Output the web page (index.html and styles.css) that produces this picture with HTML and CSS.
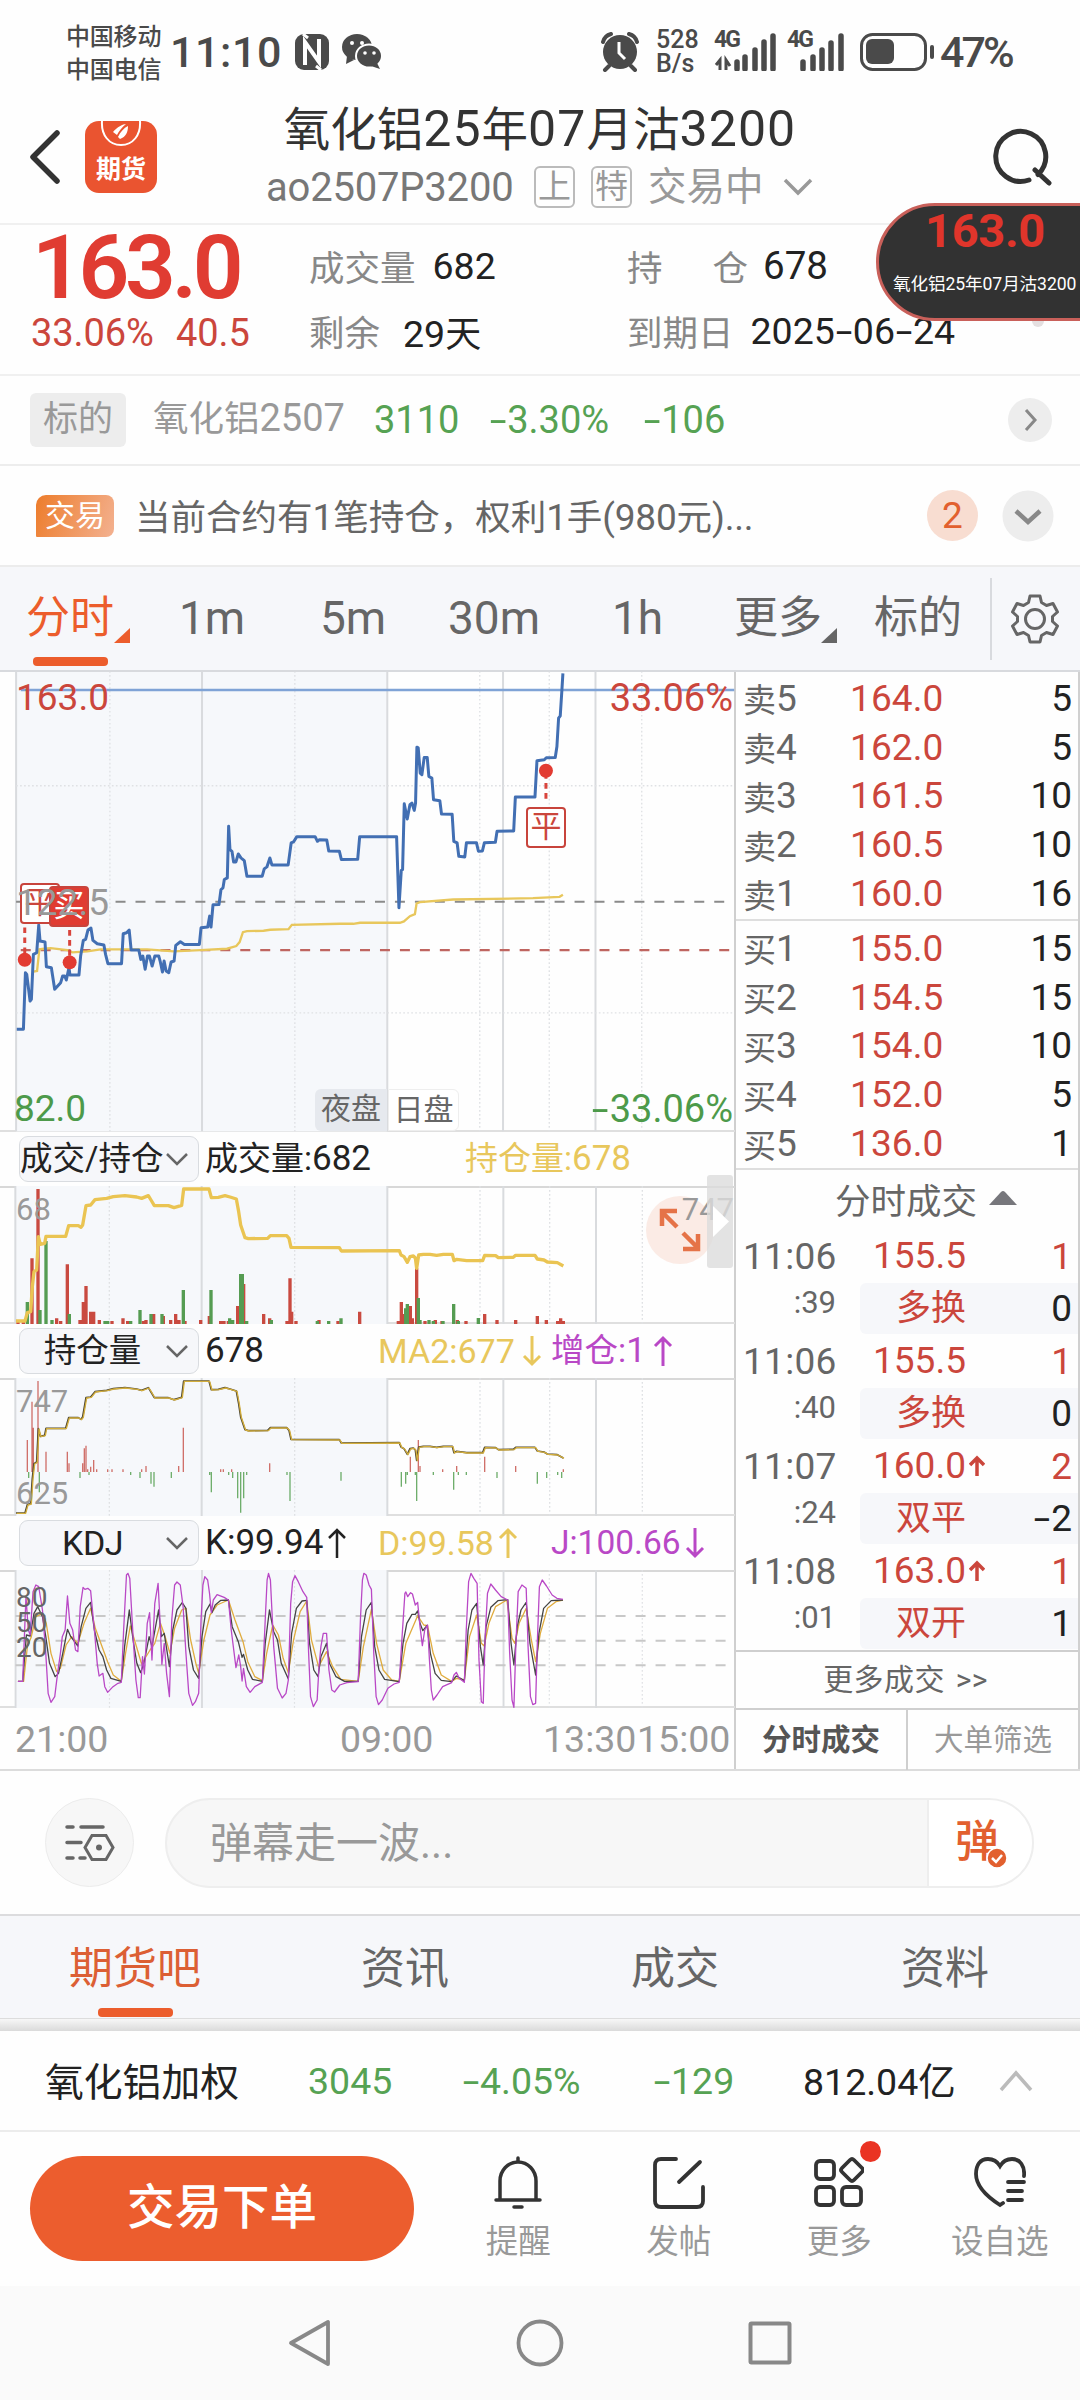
FILE: index.html
```html
<!DOCTYPE html>
<html lang="zh-CN">
<head>
<meta charset="utf-8">
<title>氧化铝25年07月沽3200</title>
<link rel="stylesheet" href="styles.css">
</head>
<body>
<div class="app">
  <header class="status">
    <div class="carriers"><span>中国移动</span><span>中国电信</span></div>
    <span class="clock">11:10</span>
    <svg class="nfc" width="34" height="36" viewBox="0 0 34 36"><rect x="0" y="0" width="34" height="36" rx="9" fill="#4a4a4a"/><path d="M10 31V8l14 20V5" fill="none" stroke="#fff" stroke-width="4"/><path d="M8 0 L13 4M26 36l-5-4" stroke="#fff" stroke-width="3"/></svg>
    <svg class="wechat" width="40" height="36" viewBox="0 0 40 36"><ellipse cx="15" cy="13" rx="15" ry="13" fill="#4a4a4a"/><path d="M5 22l-1 8 8-4z" fill="#4a4a4a"/><ellipse cx="27" cy="22" rx="13" ry="11.500" fill="#4a4a4a" stroke="#fff" stroke-width="2"/><path d="M35 29l3 6-9-3z" fill="#4a4a4a"/><g fill="#fff"><circle cx="10" cy="9" r="2"/><circle cx="20" cy="9" r="2"/><circle cx="23" cy="19" r="1.800"/><circle cx="32" cy="19" r="1.800"/></g></svg>
    <span class="grow"></span>
    <svg width="38" height="40" viewBox="0 0 38 40"><circle cx="19" cy="20" r="17" fill="#4a4a4a"/><path d="M2 10C3 6 6 3 10 2M36 10c-1-4-4-7-8-8M8 34l-4 4M30 34l4 4" stroke="#4a4a4a" stroke-width="4" fill="none" stroke-linecap="round"/><path d="M18 10v11l6 6" stroke="#fff" stroke-width="3" fill="none"/></svg>
    <div class="net"><span>528</span><span>B/s</span></div>
    <div class="cell"><span>4G</span><svg width="62" height="38" viewBox="0 0 62 38"><path d="M2 32l4-5v10M12 37V27l4 6" stroke="#4a4a4a" stroke-width="3" fill="none"/><path d="M23 36V29M31 36V24M41 36V17M50 36V9M59 36V3" stroke="#4a4a4a" stroke-width="5.500" stroke-linecap="round"/></svg></div>
    <div class="cell cell2"><span>4G</span><svg width="58" height="38" viewBox="0 0 58 38"><path d="M16 36V29M26 36V24M35 36V17M44 36V10M54 36V3" stroke="#4a4a4a" stroke-width="5.500" stroke-linecap="round"/></svg></div>
    <svg class="battery" width="76" height="38" viewBox="0 0 76 38"><rect x="1.500" y="1.500" width="64" height="35" rx="11" fill="none" stroke="#4a4a4a" stroke-width="3"/><rect x="6" y="6" width="28" height="25" rx="6" fill="#4a4a4a"/><path d="M72 14v10" stroke="#4a4a4a" stroke-width="4" stroke-linecap="round"/></svg>
    <span class="pct">47%</span>
  </header>

  <section class="head">
    <svg class="back" width="32" height="54" viewBox="0 0 32 54"><path d="M28 3L4 27l24 24" fill="none" stroke="#333" stroke-width="5.500" stroke-linecap="round" stroke-linejoin="round"/></svg>
    <div class="logo"><svg width="42" height="26" viewBox="0 0 42 26"><path d="M2 0C1 14 9 24 21 24S41 14 40 0" fill="none" stroke="#fff" stroke-width="2"/><path d="M13 11C17 6 23 3 26 3c-4 3-7 7-9 11zM18 16c2-5 6-9 10-11 0 6-2 11-8 13z" fill="#fff"/></svg><b>期货</b></div>
    <div class="titles">
      <h1>氧化铝<i>25</i>年<i>07</i>月沽<i>3200</i></h1>
      <div class="sub"><span class="code">ao2507P3200</span><span class="tag">上</span><span class="tag">特</span><span class="state">交易中</span><svg width="32" height="20" viewBox="0 0 32 20"><path d="M3 3l13 13L29 3" fill="none" stroke="#999" stroke-width="3.500"/></svg></div>
    </div>
    <svg class="search" width="60" height="60" viewBox="0 0 60 60"><path d="M36 52A25 25 0 1 1 45 46.500M42 42l14 13" fill="none" stroke="#333" stroke-width="5" stroke-linecap="round"/></svg>
  </section>

  <section class="quote">
    <div class="price"><strong>163.0</strong><div class="chg"><span>33.06%</span><span>40.5</span></div></div>
    <dl><div><dt>成交量</dt><dd>682</dd></div><div><dt>剩余</dt><dd class="left">29<em>天</em></dd></div></dl>
    <dl><div><dt class="wide"><span>持</span><span>仓</span></dt><dd class="hold">678</dd></div><div><dt>到期日</dt><dd class="date">2025<i class="m">-</i>06<i class="m">-</i>24</dd></div></dl>
    <i class="dot"></i>
    <div class="floater"><strong>163.0</strong><span>氧化铝25年07月沽3200</span></div>
  </section>

  <section class="under"><span class="badge">标的</span><span class="nm">氧化铝<i>2507</i></span><span class="g c1">3110</span><span class="g c2"><i class="m">-</i>3.30%</span><span class="g c3"><i class="m">-</i>106</span><span class="grow"></span>
    <svg width="46" height="46" viewBox="0 0 46 46"><circle cx="23" cy="23" r="22" fill="#ededed"/><path d="M19 13l9 10-9 10" fill="none" stroke="#888" stroke-width="3"/></svg></section>
  <section class="notice"><span class="trade">交易</span><span class="msg">当前合约有<i>1</i>笔持仓，权利<i>1</i>手<i>(980</i>元<i>)...</i></span><span class="grow"></span><span class="cnt">2</span>
    <svg width="52" height="52" viewBox="0 0 52 52"><circle cx="26" cy="26" r="25.500" fill="#ededed"/><path d="M14 21l12 11 12-11" fill="none" stroke="#888" stroke-width="4.500"/></svg></section>

  <nav class="periods">
    <span class="p on">分时<svg width="16" height="15"><path d="M16 0v15H0z" fill="#ec5d2c"/></svg></span><span class="p lat m1">1m</span><span class="p lat m5">5m</span><span class="p lat m30">30m</span><span class="p lat h1">1h</span><span class="p more">更多<svg width="16" height="15"><path d="M16 0v15H0z" fill="#666"/></svg></span><span class="p tgt">标的</span>
    <span class="gear"><svg width="48" height="50" viewBox="0 0 48 50"><path d="M19 2h10l1.500 6.500 5 3 6.500-2 4.500 8.500-5 4.500v5l5 4.500-4.500 8.500-6.500-2-5 3L29 48H19l-1.500-6.500-5-3-6.500 2L1.500 32l5-4.500v-5l-5-4.500L6 9.500l6.500 2 5-3z" fill="none" stroke="#666" stroke-width="3" stroke-linejoin="round"/><circle cx="24" cy="25" r="9.500" fill="none" stroke="#666" stroke-width="3"/></svg></span>
  </nav>

  <main class="board">
    <div class="charts">
      <div class="panel main-panel">
        <svg width="736" height="461" viewBox="0 36 2208 1383">
          <rect x="45" y="33" width="1117" height="1384" fill="#f6f8fb"/>
          <path class="grid" d="M46 33V1417M605 33V1417M1162 33V1417M1510 33V1417M1788 33V1417"/>
          <path class="dots" d="M328 33V1417M884 33V1417M1440 33V1417M1649 33V1417M1927 33V1417M46 378H2205M46 1061H2205"/>
          <path d="M60 90H2205" stroke="#7fa3d6" stroke-width="7"/>
          <path d="M46 727H60M345 727H2205" stroke="#8a8a8a" stroke-width="6" stroke-dasharray="30 30"/>
          <path d="M60 872H2205" stroke="#bf6560" stroke-width="7" stroke-dasharray="30 30"/>
          <polyline fill="none" stroke="#e8c75c" stroke-width="7" points="98,937 109,935 116,870 130,868 150,866 200,872 215,879 260,876 300,870 370,870 440,870 520,876 600,872 680,868 708,860 718,848 728,818 740,815 790,814 810,811 865,809 875,796 1020,793 1060,793 1080,790 1200,790 1212,786 1230,770 1245,764 1250,732 1260,728 1360,720 1600,716 1680,712 1690,706"/>
          <polyline fill="none" stroke="#426fb3" stroke-width="9" stroke-linejoin="round" points="48,1110 68,1110 74,940 78,945 88,1025 92,1020 98,885 108,880 114,797 118,845 133,848 137,922 152,925 162,990 180,970 186,950 192,950 197,962 205,925 208,947 235,947 240,890 248,843 255,840 262,812 271,806 277,843 290,853 310,857 315,885 322,913 363,913 368,823 378,820 386,812 392,872 415,872 421,900 427,890 434,930 441,890 447,890 455,920 463,890 475,890 479,905 486,938 491,905 497,935 505,940 512,908 521,905 526,858 540,847 552,855 597,855 602,805 622,803 628,770 632,803 638,736 656,735 662,690 668,685 672,660 681,655 685,500 689,570 695,575 700,607 707,607 714,583 722,595 732,603 740,650 786,650 792,628 800,622 809,595 815,616 864,616 873,550 880,547 890,531 945,531 952,545 958,540 980,541 986,574 1018,575 1024,600 1073,599 1079,531 1190,531 1197,745 1204,633 1208,630 1213,432 1222,478 1230,435 1236,430 1243,452 1247,430 1251,262 1255,264 1261,340 1266,345 1273,293 1282,293 1287,350 1296,355 1301,420 1320,423 1325,463 1357,464 1362,545 1372,550 1377,590 1395,592 1400,549 1430,549 1436,575 1448,574 1454,549 1487,548 1492,515 1542,514 1547,412 1606,412 1612,303 1634,300 1640,294 1667,293 1672,260 1677,175 1682,168 1687,90 1690,40"/>
          <path d="M72 804V890M207 812V890M1639 340V430" stroke="#d8443c" stroke-width="9" stroke-dasharray="17 13"/>
          <g fill="#e23b32"><circle cx="72" cy="901" r="21"/><circle cx="207" cy="909" r="21"/><circle cx="1639" cy="333" r="21"/></g>
        </svg>
        <span class="mark m-flat1">平</span><span class="mark m-buy">买</span><span class="mark m-flat2">平</span>
        <span class="lb hi">163.0</span><span class="lb hip">33.06%</span><span class="lb mid">122.5</span><span class="lb lo">82.0</span><span class="lb lop"><i class="m">-</i>33.06%</span>
        <span class="sess night">夜盘</span><span class="sess day">日盘</span>
      </div>

      <div class="ind"><span class="pick tight">成交/持仓<svg width="24" height="14"><path d="M2 2l10 10L22 2" fill="none" stroke="#666" stroke-width="2.500"/></svg></span><span class="v v1">成交量:<i>682</i></span><span class="v y v2">持仓量:<i>678</i></span></div>
      <div class="panel">
        <svg width="736" height="138" viewBox="0 168 2208 414">
          <rect x="45" y="168" width="1117" height="414" fill="#f6f8fb"/>
          <path class="grid" d="M46 168V582M605 168V582M1162 168V582M1510 168V582M1788 168V582"/>
          <path class="dots" d="M328 168V582M884 168V582M1440 168V582M1649 168V582M1927 168V582"/>
          <path stroke="#c94a40" stroke-width="10" d="M54 582V575M70 582V575M96 582V385M114 582V177M170 582V565M182 582V573M202 582V403M240 582V570M250 582V516M258 582V468M272 582V545M281 582V545M298 582V570M336 582V573M369 582V565M383 582V573M430 582V573M438 582V570M461 582V552M490 582V558M512 582V570M527 582V552M537 582V570M555 582V573M602 582V570M628 582V558M662 582V573M672 582V573M685 582V573M713 582V528M731 582V462M791 582V552M809 582V565M870 582V445M875 582V545M861 582V573M888 582V573M957 582V570M1014 582V573M1079 582V545M1195 582V573M1204 582V516M1213 582V552M1231 582V528M1237 582V565M1250 582V415M1275 582V573M1306 582V570M1326 582V573M1372 582V570M1398 582V573M1454 582V552M1491 582V570M1547 582V570M1612 582V558M1639 582V570M1673 582V573M1682 582V565M1690 582V573"/>
          <path stroke="#559c52" stroke-width="10" d="M82 582V516M120 582V540M138 582V333M156 582V570M208 582V552M315 582V573M323 582V573M392 582V573M420 582V540M453 582V552M486 582V552M550 582V480M633 582V480M689 582V565M698 582V570M722 582V432M727 582V432M740 582V573M814 582V570M952 582V573M986 582V573M1023 582V565M1217 582V535M1222 582V522M1255 582V504M1260 582V570M1287 582V570M1300 582V573M1329 582V573M1361 582V522M1375 582V573M1435 582V564"/>
          <g fill="none" stroke="#eac452" stroke-width="10" stroke-linejoin="round"><polyline id="oi" points="48,573 75,573 82,548 92,545 97,470 102,425 110,420 115,320 121,343 134,340 138,319 197,319 206,287 235,287 243,292 248,285 258,227 272,225 285,209 320,205 340,200 375,197 410,201 425,205 445,197 453,210 463,227 505,227 522,233 535,229 545,226 551,177 627,177 634,203 655,202 675,197 690,201 709,207 716,245 722,285 735,323 745,326 803,325 811,317 860,317 867,325 873,352 1018,353 1024,363 1198,362 1203,375 1212,380 1222,397 1230,380 1240,378 1246,384 1250,415 1256,375 1270,373 1290,373 1310,376 1330,373 1357,373 1362,392 1370,388 1400,392 1448,392 1454,376 1487,377 1495,383 1540,382 1547,376 1605,376 1612,387 1632,390 1642,396 1672,398 1690,408"/></g>
        </svg>
        <svg class="expand" width="68" height="68" viewBox="0 0 68 68"><circle cx="34" cy="34" r="34" fill="#fbe9e2"/><path d="M31 31L16 16M16 30V15h15M37 37l15 15M52 38v15H37" fill="none" stroke="#e2602f" stroke-width="4.500"/></svg>
        <span class="lb s v68">68</span><span class="lb s v747r">747</span>
        <svg class="handle" width="26" height="93" viewBox="0 0 26 93"><rect width="26" height="93" rx="3" fill="#dcdcdc" fill-opacity=".8"/><path d="M6 31v31l16-15.500z" fill="#fff"/></svg>
      </div>

      <div class="ind"><span class="pick"><b>持仓量</b><svg width="24" height="14"><path d="M2 2l10 10L22 2" fill="none" stroke="#666" stroke-width="2.500"/></svg></span><span class="v v1">678</span><span class="v y w2">MA2:677<svg class="ma" width="20" height="32"><path d="M10 1v28M2 21l8 8 8-8" fill="none" stroke="#e8c75c" stroke-width="3"/></svg></span><span class="v pu w3">增仓:<i>1</i><svg class="ar" width="20" height="32"><path d="M10 31V3M2 11l8-8 8 8" fill="none" stroke="#b948c6" stroke-width="3"/></svg></span></div>
      <div class="panel">
        <svg width="736" height="138" viewBox="0 744 2208 414">
          <rect x="45" y="744" width="1117" height="414" fill="#f6f8fb"/>
          <path class="grid" d="M46 744V1158M605 744V1158M1162 744V1158M1510 744V1158M1788 744V1158"/>
          <path class="dots" d="M328 744V1158M884 744V1158M1440 744V1158M1649 744V1158M1927 744V1158"/>
          <path stroke="#d0706a" stroke-width="4" d="M82 1026V930M96 1026V815M100 1026V893M114 1026V753M138 1026V965M202 1026V965M207 1026V1000M248 1026V1000M253 1026V955M258 1026V947M263 1026V1018M272 1026V1010M281 1026V990M290 1026V1018M323 1026V1018M336 1026V1018M369 1026V1018M425 1026V1018M438 1026V1008M536 1026V1008M550 1026V893M662 1026V1018M670 1026V1018M695 1026V1018M809 1026V1000M1231 1026V980M1255 1026V930M1260 1026V1008M1328 1026V1018M1370 1026V1008M1454 1026V980M1547 1026V1008M1690 1026V1018"/>
          <path stroke="#6fae6c" stroke-width="4" d="M86 1026V1044M118 1026V1087M240 1026V1044M267 1026V1035M392 1026V1035M420 1026V1044M453 1026V1061M462 1026V1070M514 1026V1044M629 1026V1035M634 1026V1087M686 1026V1035M698 1026V1044M713 1026V1105M722 1026V1148M731 1026V1105M740 1026V1035M861 1026V1035M870 1026V1113M1023 1026V1052M1204 1026V1070M1217 1026V1061M1222 1026V1035M1246 1026V1035M1250 1026V1113M1300 1026V1035M1361 1026V1079M1375 1026V1035M1399 1026V1035M1491 1026V1044M1612 1026V1061M1640 1026V1044M1673 1026V1035M1685 1026V1044"/>
          <g fill="none" stroke-linejoin="round"><use href="#oi" y="576" stroke="#4a4432" stroke-width="5"/><use href="#oi" x="2" y="577" stroke="#d3ae3c" stroke-width="4"/></g>
        </svg>
        <span class="lb s v68">747</span><span class="lb s v625">625</span>
      </div>

      <div class="ind"><span class="pick"><b class="kdj">KDJ</b><svg width="24" height="14"><path d="M2 2l10 10L22 2" fill="none" stroke="#666" stroke-width="2.500"/></svg></span><span class="v v1">K:99.94<svg width="20" height="32"><path d="M10 31V3M2 11l8-8 8 8" fill="none" stroke="#222" stroke-width="2.500"/></svg></span><span class="v y w2">D:99.58<svg width="20" height="32"><path d="M10 31V3M2 11l8-8 8 8" fill="none" stroke="#e8c75c" stroke-width="3"/></svg></span><span class="v pu w3">J:100.66<svg width="20" height="32"><path d="M10 1v28M2 21l8 8 8-8" fill="none" stroke="#b948c6" stroke-width="3"/></svg></span></div>
      <div class="panel">
        <svg class="stretch" width="736" height="138" viewBox="0 150 1559.600 414" preserveAspectRatio="none">
          <rect x="32" y="150" width="789" height="414" fill="#f6f8fb"/>
          <path class="grid" d="M33 150V564M428 150V564M821 150V564M1067 150V564M1263 150V564"/>
          <path class="dots" d="M232 150V564M624 150V564M1017 150V564M1164 150V564M1361 150V564"/>
          <path class="levels" d="M33 288H1545M33 362H1545M33 436H1545"/>
          <g fill="none" stroke-width="1.300" stroke-linejoin="round">
          <polyline stroke="#e0ac3e" points="38,484 50,484 58,380 66,352 76,290 90,280 98,310 108,400 120,455 128,445 140,375 152,350 165,370 178,310 192,265 202,325 215,375 228,425 240,465 257,484 266,400 276,318 285,360 300,432 318,390 328,370 340,310 350,350 360,400 370,325 385,270 394,265 404,360 415,430 421,460 432,360 445,285 460,255 484,240 498,300 515,365 525,425 540,470 556,482 565,400 578,315 590,345 600,415 611,458 622,360 636,275 650,243 660,360 675,440 692,395 705,440 722,478 759,484 770,380 787,268 798,370 812,450 830,480 846,484 860,370 885,287 898,315 906,317 918,400 935,465 957,484 967,475 984,480 995,350 1010,285 1020,370 1026,378 1036,310 1050,260 1074,240 1085,355 1091,370 1100,310 1115,265 1126,360 1135,425 1145,340 1160,265 1178,245 1193,240"/>
          <polyline stroke="#444" points="38,484 48,484 56,345 64,348 72,280 80,260 90,290 97,350 105,430 117,470 124,460 133,400 143,328 150,350 165,378 172,320 182,265 192,247 200,330 210,390 218,410 226,450 235,475 257,484 264,380 274,270 282,360 290,430 298,458 305,430 316,350 322,380 336,270 342,350 348,340 359,440 366,330 375,270 386,248 394,265 400,380 410,450 421,475 428,350 436,275 445,252 449,278 456,255 468,241 484,240 492,320 505,365 513,412 516,403 525,450 535,478 556,484 562,370 571,270 580,335 588,360 596,430 611,477 618,340 628,265 640,243 650,241 656,370 665,450 674,470 680,410 692,370 698,430 712,470 730,484 759,484 766,350 776,270 787,247 794,380 803,450 815,478 846,485 854,370 862,310 873,283 880,283 885,273 890,310 896,332 905,316 912,400 922,460 935,481 957,485 967,468 984,482 992,330 1000,270 1010,250 1018,380 1024,435 1030,320 1040,262 1055,242 1076,239 1083,370 1089,435 1096,320 1104,270 1115,247 1123,370 1135,465 1142,340 1152,265 1168,242 1193,240"/>
          <polyline stroke="#b948c6" points="38,484 48,484 55,230 60,330 64,345 70,215 76,195 82,200 90,270 97,400 102,520 108,547 116,530 122,460 128,400 132,350 138,330 143,228 148,310 154,330 160,390 165,395 170,260 176,202 180,208 186,205 192,212 200,330 206,430 210,468 218,460 222,500 228,517 238,502 250,490 257,487 262,330 268,165 271,160 275,175 282,350 288,480 293,533 297,533 302,410 306,462 312,310 317,278 322,420 328,250 335,190 340,330 343,433 348,370 353,460 359,530 364,300 370,195 375,186 382,195 388,260 394,400 400,520 408,556 414,545 421,520 426,300 430,195 434,170 440,180 444,220 448,278 452,240 460,224 475,232 484,240 490,330 500,443 506,405 510,440 513,483 516,445 522,500 530,517 540,500 556,487 562,300 566,180 569,160 573,180 580,380 588,505 598,534 606,520 611,480 616,250 620,185 625,167 632,185 642,215 650,232 654,400 658,530 664,560 672,540 676,440 680,380 685,340 692,340 697,450 703,510 709,516 720,495 735,488 759,485 764,290 768,180 771,160 776,165 782,195 787,208 792,400 797,530 802,554 810,540 822,505 835,492 846,487 852,350 858,220 860,216 864,230 870,218 874,222 880,255 885,247 890,320 895,377 900,330 906,315 910,420 914,510 918,540 926,525 938,500 957,488 962,465 967,457 973,475 984,487 988,330 993,185 998,160 1004,175 1011,190 1015,420 1020,545 1024,550 1028,350 1033,220 1040,192 1050,210 1062,230 1076,240 1080,400 1085,540 1089,562 1093,380 1098,215 1106,195 1115,205 1119,380 1124,530 1129,554 1135,550 1139,350 1143,200 1149,180 1158,198 1170,225 1180,235 1193,238"/>
          </g>
        </svg>
        <span class="lb k k80">80</span><span class="lb k k50">50</span><span class="lb k k20">20</span>
      </div>
      <div class="axis"><span class="t1">21:00</span><span class="t2">09:00</span><span class="t3">13:30</span><span class="t4">15:00</span></div>
    </div>

    <aside class="side">
      <div class="book">
        <div class="row"><span>卖<i>5</i></span><b>164.0</b><em>5</em></div><div class="row"><span>卖<i>4</i></span><b>162.0</b><em>5</em></div><div class="row"><span>卖<i>3</i></span><b>161.5</b><em>10</em></div><div class="row"><span>卖<i>2</i></span><b>160.5</b><em>10</em></div><div class="row"><span>卖<i>1</i></span><b>160.0</b><em>16</em></div>
      </div>
      <div class="book bids">
        <div class="row"><span>买<i>1</i></span><b>155.0</b><em>15</em></div><div class="row"><span>买<i>2</i></span><b>154.5</b><em>15</em></div><div class="row"><span>买<i>3</i></span><b>154.0</b><em>10</em></div><div class="row"><span>买<i>4</i></span><b>152.0</b><em>5</em></div><div class="row"><span>买<i>5</i></span><b>136.0</b><em>1</em></div>
      </div>
      <div class="th">分时成交<svg width="28" height="14"><path d="M0 14L12 1q2-2 4 0l12 13z" fill="#77777c"/></svg></div>
      <div class="ticks">
        <div class="tick"><span class="tm">11:06</span><span class="pr">155.5</span><span class="q">1</span><span class="sec">:39</span><div class="kind"><span>多换</span><em>0</em></div></div>
        <div class="tick"><span class="tm">11:06</span><span class="pr">155.5</span><span class="q">1</span><span class="sec">:40</span><div class="kind"><span>多换</span><em>0</em></div></div>
        <div class="tick"><span class="tm">11:07</span><span class="pr">160.0<svg width="16" height="22"><path d="M8 21V3M1 10l7-7 7 7" fill="none" stroke="#cb463c" stroke-width="3.500"/></svg></span><span class="q">2</span><span class="sec">:24</span><div class="kind"><span>双平</span><em><i class="m">-</i>2</em></div></div>
        <div class="tick"><span class="tm">11:08</span><span class="pr">163.0<svg width="16" height="22"><path d="M8 21V3M1 10l7-7 7 7" fill="none" stroke="#cb463c" stroke-width="3.500"/></svg></span><span class="q">1</span><span class="sec">:01</span><div class="kind"><span>双开</span><em>1</em></div></div>
      </div>
      <div class="moreticks">更多成交 &gt;&gt;</div>
      <div class="stabs"><b>分时成交</b><span>大单筛选</span></div>
    </aside>
  </main>

  <section class="danmu">
    <span class="round"><svg width="50" height="38" viewBox="0 0 50 38"><g stroke="#666" stroke-width="3.500" fill="none" stroke-linecap="round"><path d="M2 3h6M16 3h22M2 18.500h14M2 34h6M15 34h5"/><path d="M27 11.500h14l7 12-7 12H27l-7-12z" stroke-width="3"/></g><circle cx="34" cy="23.500" r="3" fill="#666"/></svg></span>
    <div class="field"><span class="ph">弹幕走一波...</span><span class="send">弹<svg width="22" height="22" viewBox="0 0 22 22"><circle cx="11" cy="11" r="10" fill="#e2602f" stroke="#fff" stroke-width="1.500"/><path d="M6 11l4 4 6-7" fill="none" stroke="#fff" stroke-width="2.500"/></svg></span></div>
  </section>
  <nav class="tabs"><span class="on">期货吧</span><span>资讯</span><span>成交</span><span>资料</span></nav>
  <div class="shade"></div>
  <section class="ticker"><span>氧化铝加权</span><span class="g">3045</span><span class="g"><i class="m">-</i>4.05%</span><span class="g"><i class="m">-</i>129</span><span class="amt"><i>812.04</i>亿</span><svg width="34" height="22" viewBox="0 0 34 22"><path d="M2 20L17 3l15 17" fill="none" stroke="#bbb" stroke-width="3.500"/></svg></section>
  <footer class="actions">
    <button class="order">交易下单</button>
    <div class="act"><svg width="50" height="54" viewBox="0 0 50 54"><g fill="none" stroke="#333" stroke-width="3.500" stroke-linecap="round"><path d="M25 2v4M7 43V25a18 19 0 0 1 36 0v18M3 44h44M21 51h8"/></g></svg><span>提醒</span></div>
    <div class="act"><svg width="52" height="54" viewBox="0 0 52 54"><g fill="none" stroke="#333" stroke-width="3.800" stroke-linecap="round"><path d="M23 3H8q-6 0-6 6v36q0 6 6 6h36q6 0 6-6V31M47 6L26 26"/></g></svg><span>发帖</span></div>
    <div class="act"><svg width="50" height="54" viewBox="0 0 50 54"><g fill="none" stroke="#333" stroke-width="3.800"><rect x="2" y="5" width="18" height="18" rx="4"/><rect x="2" y="31" width="18" height="18" rx="4"/><rect x="28" y="31" width="19" height="18" rx="4"/><path d="M36 4q2-2 4 0l8 8q2 2 0 4l-8 8q-2 2-4 0l-8-8q-2-2 0-4z"/></g></svg><i class="red"></i><span>更多</span></div>
    <div class="act"><svg width="52" height="54" viewBox="0 0 52 54"><g fill="none" stroke="#333" stroke-width="3.800" stroke-linecap="round"><path d="M50 20C51 10 46 3 38 3c-5 0-9 2-12 7C23 5 19 3 14 3 6 3 2 9 2 18c0 12 10 22 24 31l3-2M34 26h16M34 35h14M34 44h14"/></g></svg><span>设自选</span></div>
  </footer>
  <nav class="sys">
    <svg width="46" height="50" viewBox="0 0 46 50"><path d="M41 4v42L4 25z" fill="none" stroke="#888" stroke-width="3.800" stroke-linejoin="round"/></svg>
    <svg width="50" height="50" viewBox="0 0 50 50"><circle cx="25" cy="25" r="21.500" fill="none" stroke="#888" stroke-width="3.800"/></svg>
    <svg width="46" height="50" viewBox="0 0 46 50"><rect x="3.500" y="5.500" width="39" height="39" rx="1" fill="none" stroke="#888" stroke-width="4"/></svg>
  </nav>
</div>
</body>
</html>
```
FILE: styles.css
```css
* { box-sizing: border-box; }
body { margin: 0; background: #fefefe; font-family: Roboto, "Noto Sans CJK SC", sans-serif; color: #222; }
.app { width: 1080px; height: 2400px; overflow: hidden; display: flex; flex-direction: column; }
i, em { font-style: normal; }
svg { display: block; flex: none; }
span, b, strong, em, dt, dd { white-space: nowrap; }
.grow { flex: 1; }
.g { color: #56a253; }
/* wide minus sign used in figures */
.m { display: inline-block; width: .48em; text-align: center; transform: scaleX(1.6); }

.status { height: 104px; padding: 0 66px 1px 66px; display: flex; align-items: center; color: #4a4a4a; flex: none; }
.carriers { width: 104px; display: flex; flex-direction: column; font-size: 24px; line-height: 33px; padding-top: 5px; font-weight: 500; letter-spacing: -.2px; }
.clock { font-size: 43px; width: 125px; letter-spacing: .6px; font-weight: 500; }
.nfc { margin-right: 13px; }
.net { width: 58px; margin-left: 17px; font-size: 25px; line-height: 24px; font-weight: 500; display: flex; flex-direction: column; }
.cell { position: relative; width: 73px; }
.cell span { position: absolute; left: 0; top: -5px; font-size: 23px; line-height: 24px; font-weight: 700; letter-spacing: -2px; }
.battery { margin-right: 4px; }
.pct { font-size: 43px; width: 74px; letter-spacing: -3px; font-weight: 500; }

.head { height: 121px; display: flex; padding-left: 29px; border-bottom: 2px solid #f0f0f0; flex: none; }
.back { margin-top: 26px; }
.logo { margin: 17px 0 0 24px; width: 72px; height: 72px; border-radius: 14px; background: #ea5430; color: #fff; display: flex; flex-direction: column; align-items: center; }
.logo b { font-size: 25px; line-height: 36px; margin-top: 5px; font-weight: 700; }
.titles { width: 766px; display: flex; flex-direction: column; align-items: center; }
h1 { margin: -1px 0 0; font-size: 46.500px; line-height: 52px; font-weight: 400; color: #333; white-space: nowrap; }
h1 i { font-size: 50px; letter-spacing: 1.100px; }
.sub { display: flex; align-items: center; height: 62px; color: #999; padding-left: 0; }
.code { font-size: 40px; color: #777; width: 268px; letter-spacing: -.2px; }
.tag { width: 41px; height: 42px; border: 2px solid #bbb; border-radius: 6px; margin-right: 16px; font-size: 33px; line-height: 37px; text-align: center; }
.state { font-size: 38.500px; width: 134px; line-height: 50px; }
.search { margin: 24px 0 0 70px; }

.quote { height: 151px; display: flex; position: relative; border-bottom: 2px solid #f0f0f0; flex: none; }
.price { width: 309px; padding-left: 32px; color: #e03c32; }
.price strong { display: block; font-size: 89px; line-height: 86px; font-weight: 600; letter-spacing: -4.300px; }
.chg { display: flex; font-size: 38px; line-height: 44px; color: #cb463c; letter-spacing: -.1px; margin-left: -1px; }
.chg span:first-child { width: 145px; }
dl { margin: 0; width: 318px; padding-top: 8px; }
dl div { display: flex; height: 65px; align-items: center; font-size: 37.500px; }
dt { color: #888; font-size: 35.500px; margin-right: 17px; }
dt.wide { width: 121px; display: flex; justify-content: space-between; margin-right: 15px; }
dd { margin: 0; color: #222; }
dd.left { margin-left: 6px; }
dd.hold { font-size: 38.500px; }
dd em { font-size: 36px; }
.dot { position: absolute; left: 1032px; top: 88px; width: 12px; height: 14px; border-radius: 6px; background: #e4dfe0; }
.floater { position: absolute; left: 876px; top: -22px; width: 220px; height: 118px; border: 3px solid #c9605a; border-radius: 59px 0 0 59px; background: #323232; display: flex; flex-direction: column; padding-left: 14px; color: #fff; }
.floater strong { font-size: 47px; line-height: 49px; font-weight: 700; color: #e0352b; letter-spacing: -.3px; padding-left: 32px; }
.floater span { font-size: 17.600px; line-height: 24px; margin-top: 17px; letter-spacing: -.1px; }

.under { height: 90px; display: flex; align-items: center; padding: 0 27px 0 30px; border-bottom: 2px solid #ededed; font-size: 38px; flex: none; }
.badge { width: 96px; height: 54px; border-radius: 6px; background: #ededed; color: #999; font-size: 35px; line-height: 54px; text-align: center; margin-right: 27px; }
.nm { color: #999; font-size: 35.500px; width: 221px; line-height: 50px; margin-top: -4px; }
.nm i { font-size: 38px; }
.c1, .c2, .c3 { margin-top: -1px; }
.c1 { width: 115px; } .c2 { width: 154px; }
.notice { height: 99px; display: flex; align-items: center; padding: 0 26px 0 36px; color: #666; font-size: 35.500px; flex: none; }
.trade { width: 78px; height: 42px; border-radius: 10px 8px 8px 1px; background: linear-gradient(110deg, #ed7c2b, #f3b190); color: #fff; font-size: 30px; line-height: 42px; text-align: center; margin-right: 21px; }
.msg { margin-top: -2px; }
.msg i { font-size: 37px; letter-spacing: -.2px; }
.cnt { width: 51px; height: 51px; border-radius: 50%; background: #f8ddd1; color: #e2602f; text-align: center; line-height: 51px; margin-right: 24px; font-size: 37px; }

.periods { height: 107px; background: #f6f7fa; border-top: 2px solid #ececec; border-bottom: 2px solid #d8dade; display: flex; align-items: center; color: #666; flex: none; }
.p { font-size: 44px; position: relative; line-height: 67px; }
.p svg { position: absolute; left: 87px; bottom: 9px; }
.lat { font-size: 46px; }
.on { color: #ec5d2c; }
.p.on { width: 153px; padding-left: 26px; }
.p.on svg { left: 114px; }
.p.on::after { content: ""; position: absolute; left: 33px; top: 72px; width: 75px; height: 9px; border-radius: 4px; background: #ec5d2c; }
.m1 { width: 139px; padding-left: 26px; } .m5 { width: 128px; padding-left: 28px; } .m30 { width: 166px; padding-left: 28px; letter-spacing: 0; } .h1 { width: 148px; padding-left: 26px; }
.more { width: 140px; } .tgt { width: 116px; }
.gear { border-left: 2px solid #d8dade; height: 82px; display: flex; align-items: center; padding-left: 19px; }

.board { display: flex; height: 1099px; flex: none; border-bottom: 2px solid #dcdcdc; }
.charts { width: 736px; border-right: 2px solid #cfcfcf; display: flex; flex-direction: column; }
.panel { position: relative; height: 138px; border-bottom: 2px solid #dfdfdf; border-top: 2px solid #d8d8d8; flex: none; width: 735px; }
.panel > svg:first-child { margin-top: -2px; }
.main-panel { height: 460px; border-top: 0; }
.main-panel > svg:first-child { margin-top: 0; height: 460px; }
.grid { stroke: #d9dbde; stroke-width: 6; }
.dots { stroke: #dfe1e4; stroke-width: 4; stroke-dasharray: 5 7; fill: none; }
.stretch .grid { stroke-width: 4; }
.stretch .dots { stroke-width: 2.500; }
.stretch polyline { vector-effect: non-scaling-stroke; }
.levels { stroke: #c8c8c8; stroke-width: 2; stroke-dasharray: 10 10; vector-effect: non-scaling-stroke; }
.lb { position: absolute; font-size: 37px; line-height: 40px; }
.hi { left: 16px; top: 6px; color: #cb463c; } .hip { right: 2px; top: 6px; color: #cb463c; font-size: 38px; }
.mid { left: 16px; top: 211px; color: #999; }
.lo { left: 14px; top: 417px; color: #4d9a4a; } .lop { right: 2px; top: 417px; color: #4d9a4a; font-size: 38px; }
.mark { position: absolute; width: 40px; height: 41px; border: 2px solid #c8443c; border-radius: 4px; color: #cb463c; background: #fff; font-size: 31px; line-height: 35px; text-align: center; }
.m-flat1 { left: 20px; top: 211px; } .m-buy { left: 49px; top: 214px; background: #e03c32; color: #fff; } .m-flat2 { left: 526px; top: 135px; }
.sess { position: absolute; top: 417px; height: 42px; font-size: 30px; line-height: 40px; color: #666; text-align: center; }
.night { left: 315px; width: 72px; background: #e6e9ee; border-radius: 6px 0 0 6px; } .day { left: 388px; width: 71px; border: 1px solid #eee; border-radius: 0 6px 6px 0; background: #fff; }
.s { font-size: 31px; color: #999; }
.v68 { left: 16px; top: 2px; } .v747r { right: 1px; top: 2px; } .v625 { left: 16px; top: 94px; }
.expand { position: absolute; left: 646px; top: 8px; opacity: .88; }
.handle { position: absolute; left: 707px; top: -13px; z-index: 2; }
.k { font-size: 28px; color: #666; line-height: 30px; left: 16px; }
.k80 { top: 11px; } .k50 { top: 36px; } .k20 { top: 61px; }
.ind { height: 54px; display: flex; align-items: center; padding: 0 0 1px 19px; font-size: 34px; flex: none; line-height: 44px; }
.pick { width: 180px; height: 46px; border: 1px solid #d9dce0; border-radius: 9px; background: #f6f7fa; display: flex; align-items: center; justify-content: space-between; padding-right: 9px; font-size: 32.500px; line-height: 42px; margin-right: 6px; }
.pick b { font-weight: 400; flex: 1; text-align: center; }
.pick .kdj { font-size: 34px; letter-spacing: -.5px; }
.pick.tight { padding-left: 0; }
.v { display: flex; align-items: center; font-size: 33px; }
.v i { font-size: 35px; } .v svg { margin-left: 4px; }
.v1 { width: 173px; font-size: 35px; }
.v1:has(i), .v2 { font-size: 33px; }
.v2 { margin-left: 87px; }
.y { color: #e8c75c; } .pu { color: #b948c6; }
.w2 { width: 173px; font-size: 34px; }
.v .ma { margin-left: 7px; }
.w3 { font-size: 33.500px; } .v .ar { margin-left: 7px; }
.axis { height: 62px; font-size: 37.500px; line-height: 62px; color: #999; display: flex; padding-left: 15px; }
.t1 { width: 325px; } .t2 { width: 203px; } .t3 { width: 94px; }

.side { width: 344px; border-right: 2px solid #d0d0d0; display: flex; flex-direction: column; }
.book { height: 249px; padding-top: 2px; border-bottom: 2px solid #dedede; flex: none; }
.row { height: 48.800px; display: flex; align-items: center; padding: 0 6px 0 7px; font-size: 37px; }
.row span { width: 107px; font-size: 33px; color: #666; display: flex; align-items: center; }
.row span i { font-size: 37px; }
.row b, .row em { font-weight: 400; } .row b { color: #cb463c; flex: 1; letter-spacing: .1px; }
.bids { height: 249px; padding-top: 3px; }
.th { height: 59px; display: flex; align-items: center; padding: 0 0 3px 99px; font-size: 35.500px; color: #666; gap: 12px; flex: none; }
.ticks { height: 421px; flex: none; }
.tick { height: 105px; display: grid; grid-template-columns: 105px 19px 1fr auto; grid-template-rows: 54px 51px; font-size: 37px; padding-left: 7px; }
.tm { color: #666; grid-column: 1; line-height: 56px; letter-spacing: .3px; } .pr { grid-column: 3; color: #cb463c; display: flex; align-items: center; gap: 3px; padding-left: 6px; line-height: 56px; } .q { grid-column: 4; color: #cb463c; padding-right: 6px; line-height: 56px; }
.sec { grid-column: 1; font-size: 31px; color: #666; text-align: right; padding-right: 12px; line-height: 40px; }
.kind { grid-column: 2 / 5; margin-left: 12px; background: #f6f7fa; border-radius: 6px 0 0 6px; display: flex; justify-content: space-between; align-items: center; padding: 0 6px 0 36px; line-height: 50px; color: #cb463c; font-size: 35px; }
.kind em { color: #222; font-size: 37px; }
.moreticks { height: 60px; border-top: 2px solid #cfcfcf; border-bottom: 2px solid #cfcfcf; font-size: 30px; line-height: 55px; color: #666; text-align: center; padding-right: 3px; word-spacing: 3px; letter-spacing: .4px; flex: none; }
.stabs { flex: 1; display: flex; font-size: 29.500px; line-height: 60px; text-align: center; color: #999; }
.stabs b { width: 172px; border-right: 2px solid #cfcfcf; color: #555; } .stabs span { flex: 1; }

.danmu { height: 143px; display: flex; align-items: center; padding-left: 45px; flex: none; }
.round { width: 89px; height: 89px; border-radius: 50%; background: #f7f7f7; border: 1px solid #ececec; display: flex; align-items: center; justify-content: center; margin-right: 31px; }
.field { width: 869px; height: 90px; border-radius: 45px; border: 2px solid #eee; background: #f7f7f7; display: flex; overflow: hidden; }
.ph { flex: 1; padding-left: 43px; font-size: 42px; line-height: 87px; color: #999; }
.send { position: relative; width: 105px; border-left: 2px solid #eee; background: #fff; padding-left: 26px; font-size: 44px; font-weight: 500; line-height: 84px; color: #e2602f; }
.send svg { position: absolute; left: 57px; top: 47px; }
.tabs { height: 104px; border-top: 2px solid #dcdcde; background: #f6f7fa; display: grid; grid-template-columns: repeat(4, 1fr); font-size: 44px; line-height: 106px; text-align: center; color: #666; flex: none; }
.tabs .on { position: relative; color: #dc5f34; }
.tabs .on::after { content: ""; position: absolute; left: 98px; top: 92px; width: 75px; height: 9px; border-radius: 4px; background: #ec5d2c; }
.shade { height: 13px; border-top: 1px solid #ddd; background: linear-gradient(#f7f7f7, #dadada); flex: none; }
.ticker { height: 101px; border-bottom: 2px solid #ececec; display: grid; grid-template-columns: 263px 154px 191px 150px 196px 40px; align-items: center; padding-left: 45px; font-size: 38.800px; flex: none; }
.ticker > span:first-child, .amt { margin-top: -4px; }
.ticker .g { font-size: 37.500px; }
.amt { font-size: 37.500px; }
.actions { height: 154px; display: flex; padding: 24px 0 0 30px; flex: none; }
.order { width: 384px; height: 105px; border: 0; border-radius: 53px; background: #ec5d2e; color: #fff; font: 500 47.500px Roboto, "Noto Sans CJK SC", sans-serif; line-height: 103px; margin-right: 24px; padding: 0; }
.act { width: 160.500px; display: flex; flex-direction: column; align-items: center; font-size: 32.500px; line-height: 40px; color: #999; position: relative; gap: 12px; }
.red { position: absolute; left: 101px; top: -15px; width: 21px; height: 21px; border-radius: 50%; background: #ea3323; }
.sys { flex: 1; background: #fafafa; display: flex; align-items: flex-start; padding: 32px 0 0 287px; gap: 182px; }
```
